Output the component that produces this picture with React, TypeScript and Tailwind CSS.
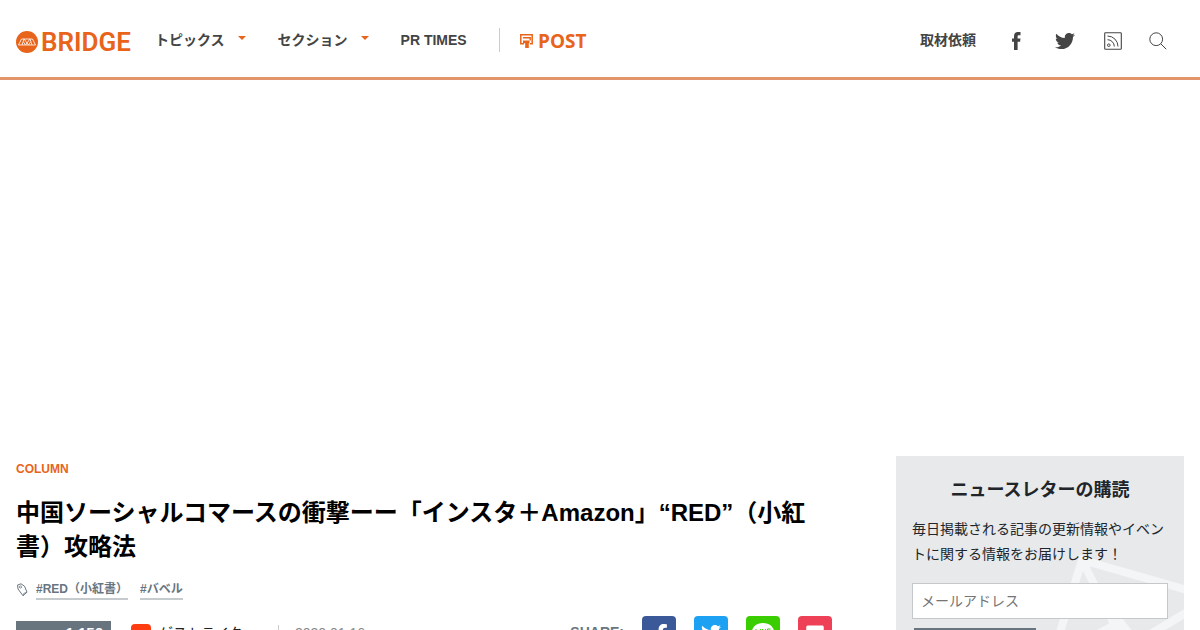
import { FaTwitter, FaFacebookF, FaGetPocket } from "react-icons/fa";

function BridgeLogo() {
  return (
    <svg viewBox="0 0 118 24" className="h-6 w-[118px] overflow-visible" role="img" aria-label="BRIDGE">
      <circle cx="11" cy="12" r="11" fill="#e8641b" />
      <path
        d="M2.500 15 5.500 9h11l3 6zM8 9l-2 6M8 9l4.500 6 2-3M14 9l-4.500 6-2-3M14 9l2 6"
        fill="none"
        stroke="#fff"
        strokeWidth=".8"
      />
      <text x="25" y="21" fill="#e8641b" className="font-['Roboto',sans-serif] text-[26px] font-semibold">
        BRIDGE
      </text>
    </svg>
  );
}

function PostLogo() {
  return (
    <svg viewBox="0 0 68 20" className="h-5 w-[68px] overflow-visible" role="img" aria-label="POST">
      <path d="M4 13.700H.8V4.800h11.400v8.900H10" fill="none" stroke="#e8641b" strokeWidth="1.500" />
      <path d="M3 7.800h7.200v2.700" fill="none" stroke="#e8641b" strokeWidth="1.400" />
      <path d="M3 10.500h6.500v2.700H8.800V18H5.200v-4.800H3z" fill="#e8641b" />
      <text x="18" y="18" fill="#e8641b" className="font-['Open_Sans',sans-serif] text-[19px] font-bold">
        POST
      </text>
    </svg>
  );
}

function Caret() {
  return (
    <svg viewBox="0 0 8 4" className="mb-[3px] h-1 w-2" aria-hidden="true">
      <path d="M0 0h8L4 4z" fill="#e8641b" />
    </svg>
  );
}

function RssIcon() {
  return (
    <svg viewBox="0 0 18 18" className="size-[18px]" fill="none" stroke="#444" aria-hidden="true">
      <rect x=".7" y=".7" width="16.6" height="16.6" rx=".8" strokeWidth="1.1" />
      <circle cx="4.8" cy="13.2" r="1.3" />
      <path d="M3.5 7.7a6.8 6.8 0 0 1 6.8 6.8M3.5 4a10.5 10.5 0 0 1 10.5 10.5" />
    </svg>
  );
}

function SearchIcon() {
  return (
    <svg viewBox="0 0 18 18" className="size-[18px]" fill="none" stroke="#444" aria-hidden="true">
      <circle cx="7.2" cy="7.2" r="6.4" />
      <path d="m11.8 11.8 5.4 5.4" />
    </svg>
  );
}

function FacebookIcon() {
  return (
    <svg viewBox="0 0 9 18" className="h-[18px] w-[9px]" fill="#444" aria-hidden="true">
      <path d="M2 18V9.700H0V6.500h2V4.200C2 1.500 3.400 0 6 0h2.500v3.200H7C5.900 3.200 5.600 3.600 5.600 4.600v1.900h2.900l-.4 3.200H5.600V18z" />
    </svg>
  );
}

function TagIcon() {
  return (
    <svg viewBox="0 0 12 14" className="mr-2 h-[14px] w-3" fill="none" stroke="#68757f" aria-hidden="true">
      <path d="m2 6-.4-4L5 .8l3.500 2.400 2.500 6-4 3.500z" />
      <path d="m11 9.200-3.200 1.100-.8 2.400" strokeWidth=".7" />
      <circle cx="4.500" cy="4" r="1.100" strokeWidth=".8" />
    </svg>
  );
}

function Header() {
  return (
    <header className="flex h-20 items-center justify-between border-b-[3px] border-[#e2946a] px-4 text-sm font-bold text-[#444]">
      <div className="flex items-center">
        <a href="#" className="mt-[6px]">
          <BridgeLogo />
        </a>
        <nav className="flex items-center pt-[2px]">
          <button className="ml-[21px] flex items-center gap-[13px]">
            トピックス
            <Caret />
          </button>
          <button className="ml-8 flex items-center gap-[13px]">
            セクション
            <Caret />
          </button>
          <a href="#" className="ml-8">
            PR TIMES
          </a>
          <a href="#" className="ml-8 flex h-6 items-center border-l border-[#ccc] pl-5">
            <PostLogo />
          </a>
        </nav>
      </div>
      <div className="flex items-center pt-[2px] pr-[17px]">
        <a href="#">取材依頼</a>
        <div className="flex items-center pt-[2px]">
          <a href="#" aria-label="Facebook" className="ml-9">
            <FacebookIcon />
          </a>
          <a href="#" aria-label="Twitter" className="ml-[34px]">
            <FaTwitter className="size-5" />
          </a>
          <a href="#" aria-label="RSS" className="ml-[29px]">
            <RssIcon />
          </a>
          <button aria-label="検索" className="ml-[27px]">
            <SearchIcon />
          </button>
        </div>
      </div>
    </header>
  );
}

function Article() {
  return (
    <article className="min-w-0 flex-1">
      <a href="#" className="mt-1 block text-xs leading-[18px] font-bold text-[#e8641b]">
        COLUMN
      </a>
      <h1 className="mt-[18px] text-2xl leading-[34px] font-bold text-black">
        中国ソーシャルコマースの衝撃ーー「インスタ＋Amazon」“RED”（小紅書）攻略法
      </h1>
      <div className="mt-4 flex items-center text-xs leading-[18px] font-bold text-[#68757f]">
        <TagIcon />
        <a href="#" className="mr-3 border-b-2 border-[#c5cacd]">
          #RED（小紅書）
        </a>
        <a href="#" className="border-b-2 border-[#c5cacd]">
          #バベル
        </a>
      </div>
      <div className="mt-4 flex items-start justify-between">
        <div className="flex items-start pt-[5px]">
          <span className="h-6 w-[95px] bg-[#68757f] pr-2 text-right text-[15px] leading-6 font-bold text-white">
            1,156
          </span>
          <span className="mt-[3px] ml-5 size-5 rounded bg-[#ff3d10]" />
          <a href="#" className="ml-2 w-[119px] text-sm leading-6 text-[#222]">
            ゲストライター
          </a>
          <time className="mt-1 border-l border-[#ccc] pl-4 text-sm leading-4 text-[#888]">2020.01.16</time>
        </div>
        <div className="flex items-start">
          <span className="mr-[18px] pt-1 text-sm leading-6 font-bold text-[#68757f]">SHARE:</span>
          <div className="flex gap-[18px] text-white">
            <a href="#" aria-label="Facebook" className="flex size-[34px] items-end justify-center rounded bg-[#3b5998] pb-1 pl-1">
              <FaFacebookF className="size-[22px]" />
            </a>
            <a href="#" aria-label="Twitter" className="flex size-[34px] items-center justify-center rounded bg-[#1da1f2]">
              <FaTwitter className="size-5" />
            </a>
            <a href="#" aria-label="LINE" className="flex size-[34px] items-center justify-center rounded bg-[#3ace01]">
              <svg viewBox="0 0 24 22" className="h-[22px] w-6" aria-hidden="true">
                <path d="M12 1C5.500 1 1 5 1 9.800c0 4.500 4 8 9.500 8.600 1 .2.8 1 .6 3C17 18.500 23 14.500 23 9.800 23 5 18.500 1 12 1z" fill="#fff" />
                <path d="M5 7v5h2.500M9.500 7v5M11.500 12V7l3 5V7M19.500 7h-3v5h3m-3-2.500h3" fill="none" stroke="#3ace01" />
              </svg>
            </a>
            <a href="#" aria-label="Pocket" className="flex size-[34px] items-center justify-center rounded bg-[#ee4056]">
              <FaGetPocket className="size-5" />
            </a>
          </div>
        </div>
      </div>
    </article>
  );
}

function Newsletter() {
  return (
    <aside className="relative w-72 shrink-0 overflow-hidden bg-[#e7e9eb] px-4 pt-5 pb-4 text-[#212529]">
      <svg viewBox="0 0 140 120" className="absolute top-[96px] right-0 h-[120px] w-[140px]" fill="none" stroke="#f4f5f6" strokeWidth="8" aria-hidden="true">
        <path d="M10 100 38 8 150 40M38 8l50 100M90 92l60-36M36 92l40-22 40 50" />
      </svg>
      <form className="relative">
        <h2 className="text-center text-lg leading-7 font-bold">ニュースレターの購読</h2>
        <p className="mt-[13px] text-sm leading-[25px]">
          毎日掲載される記事の更新情報やイベントに関する情報をお届けします！
        </p>
        <input
          type="email"
          aria-label="メールアドレス"
          placeholder="メールアドレス"
          className="mt-4 block h-9 w-full border border-[#c5c8ca] bg-white px-2 text-sm placeholder:text-[#757575]"
        />
        <button className="mt-[9px] ml-[2px] h-8 w-[122px] border-2 border-[#68757f] bg-[#68757f] text-sm font-bold text-white">
          購読する
        </button>
      </form>
    </aside>
  );
}

export default function App() {
  return (
    <div className="bg-white font-['Liberation_Sans','Noto_Sans_CJK_JP',sans-serif]" lang="ja">
      <Header />
      <div className="h-94" />
      <main className="flex items-start gap-16 px-4">
        <Article />
        <Newsletter />
      </main>
    </div>
  );
}
